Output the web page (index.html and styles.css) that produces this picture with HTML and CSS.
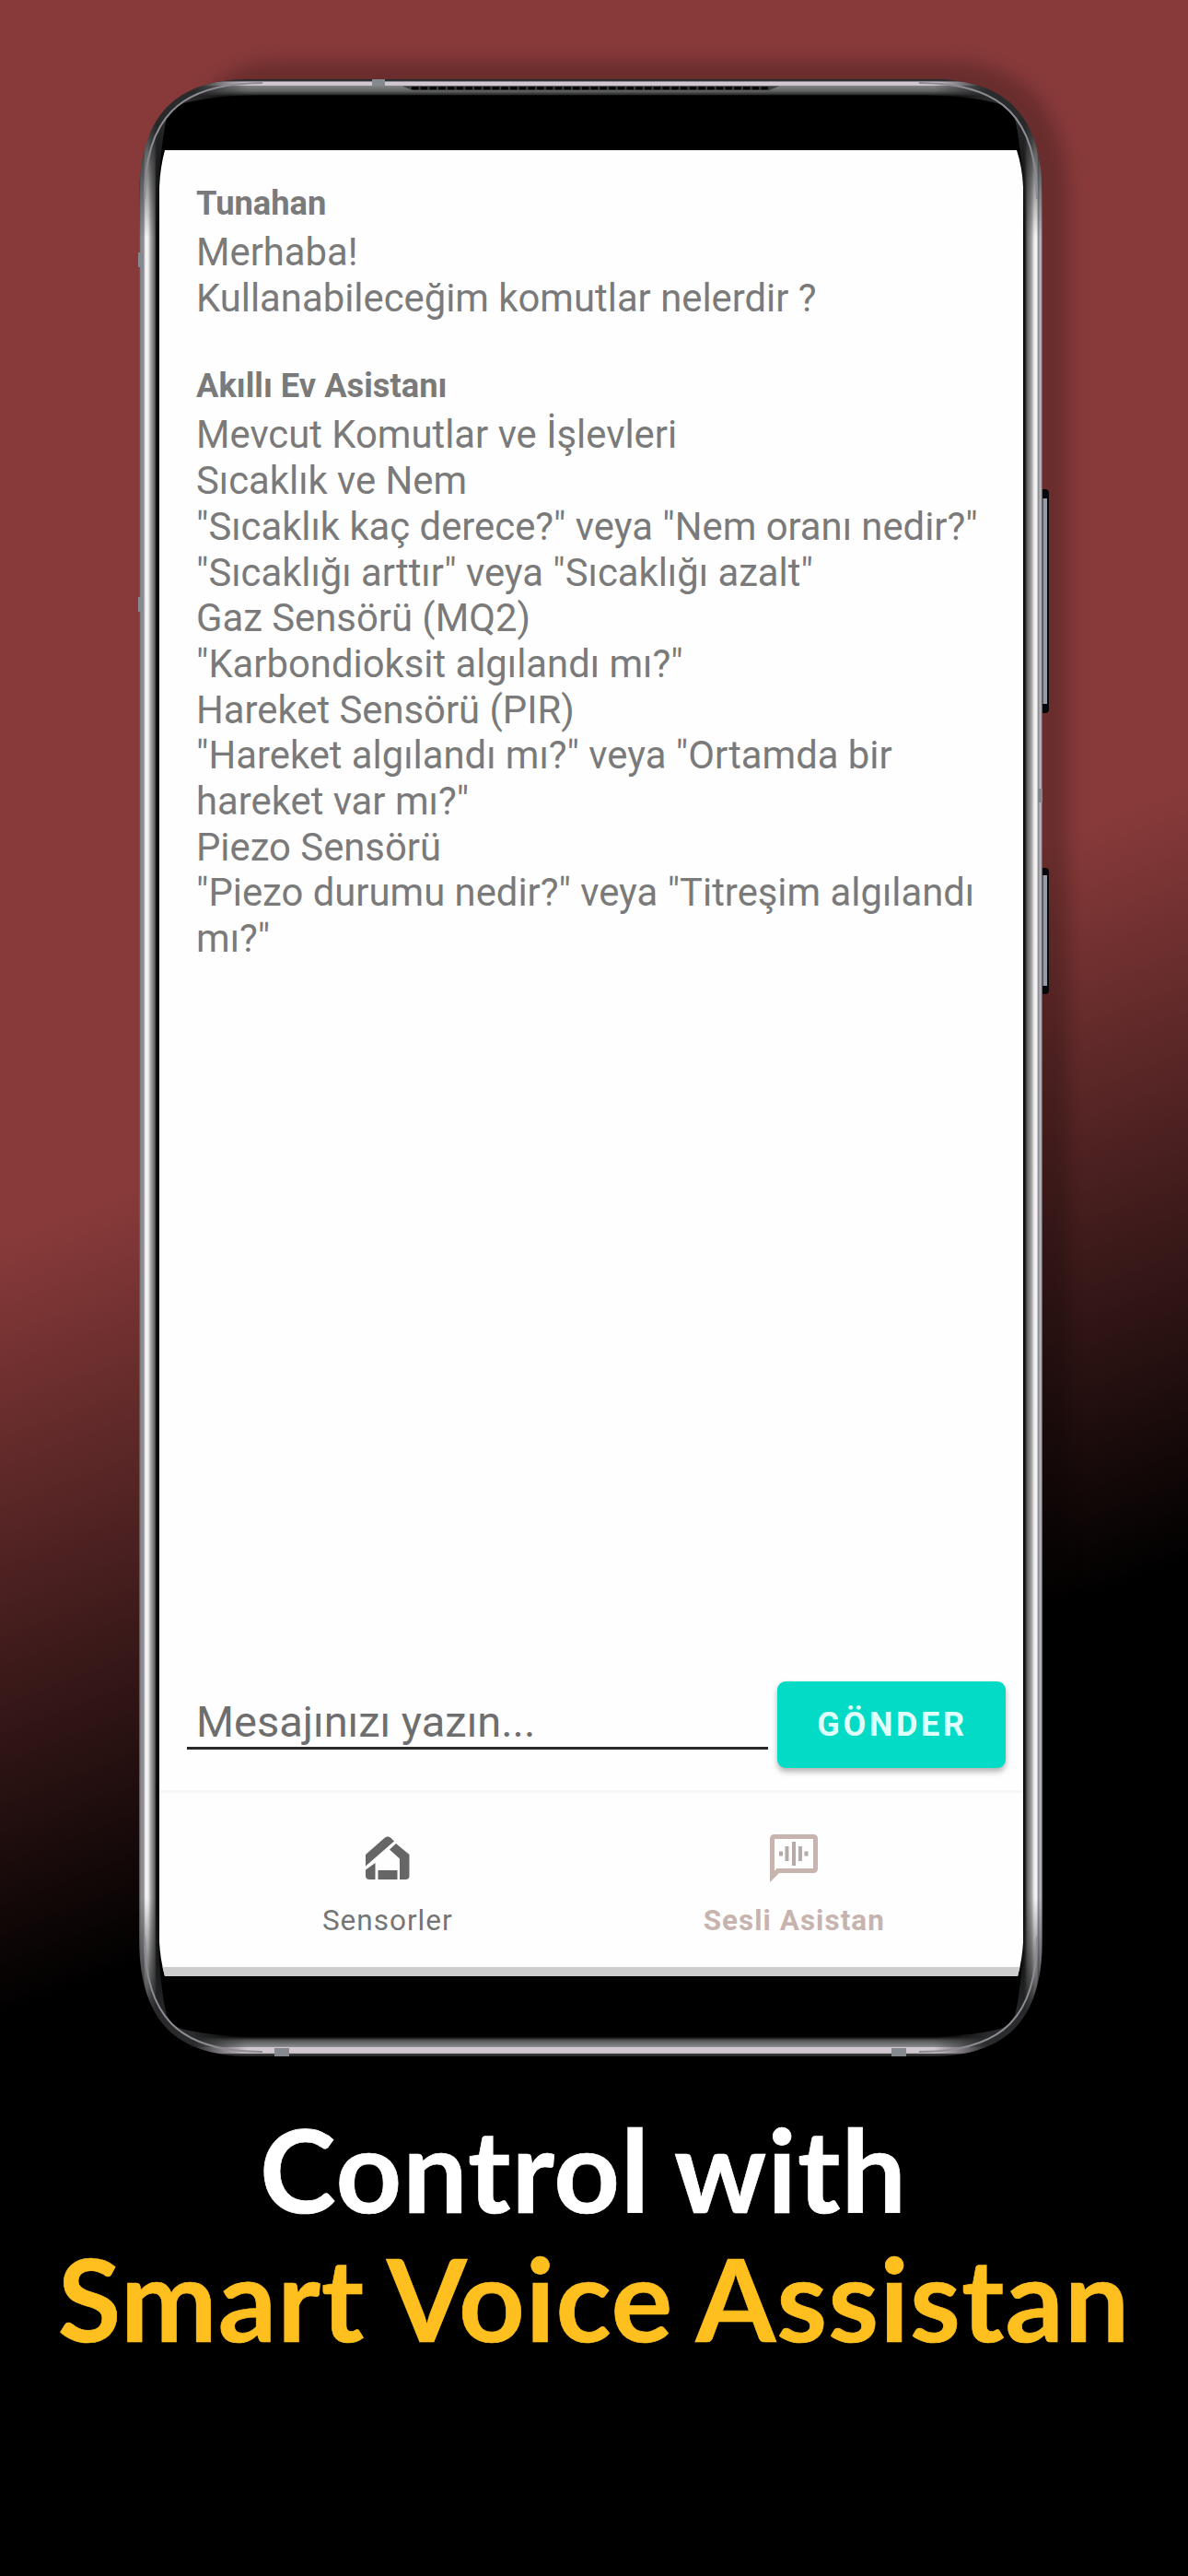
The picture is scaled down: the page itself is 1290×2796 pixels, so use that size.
FILE: index.html
```html
<!DOCTYPE html>
<html lang="tr">
<head>
<meta charset="utf-8">
<title>Akıllı Ev Asistanı</title>
<link rel="stylesheet" href="styles.css">
</head>
<body>
<main class="poster">
  <section class="phone">
    <svg class="frame" viewBox="0 0 1020 2180" aria-hidden="true">
      <defs>
        <linearGradient id="side" x1="16" x2="997" y1="0" y2="0" gradientUnits="userSpaceOnUse">
          <stop offset="0" stop-color="#4a4a4e"/>
          <stop offset=".002" stop-color="#8c8b92"/>
          <stop offset=".005" stop-color="#8a8a90"/>
          <stop offset=".007" stop-color="#f4f4f4"/>
          <stop offset=".010" stop-color="#f0f0f0"/>
          <stop offset=".013" stop-color="#a4a5a4"/>
          <stop offset=".0175" stop-color="#5c5d5c"/>
          <stop offset=".019" stop-color="#0c0c0c"/>
          <stop offset=".022" stop-color="#000"/>
          <stop offset=".979" stop-color="#000"/>
          <stop offset=".981" stop-color="#222"/>
          <stop offset=".983" stop-color="#636463"/>
          <stop offset=".988" stop-color="#a4a5a4"/>
          <stop offset=".991" stop-color="#f0f0f0"/>
          <stop offset=".994" stop-color="#f4f4f4"/>
          <stop offset=".995" stop-color="#85858c"/>
          <stop offset=".998" stop-color="#c4c1c9"/>
          <stop offset="1" stop-color="#4a4a4e"/>
        </linearGradient>
        <linearGradient id="edge" x1="0" x2="0" y1="16" y2="2162" gradientUnits="userSpaceOnUse">
          <stop offset="0" stop-color="#222"/>
          <stop offset=".001" stop-color="#3a3a3e"/>
          <stop offset=".0013" stop-color="#d2c9d2"/>
          <stop offset=".003" stop-color="#cfc6cf"/>
          <stop offset=".0034" stop-color="#808284"/>
          <stop offset=".006" stop-color="#606161"/>
          <stop offset=".0078" stop-color="#2a2a2a"/>
          <stop offset=".0085" stop-color="#000"/>
          <stop offset=".990" stop-color="#000"/>
          <stop offset=".992" stop-color="#555656"/>
          <stop offset=".9951" stop-color="#8a8c8c"/>
          <stop offset=".9955" stop-color="#d2c9d2"/>
          <stop offset=".9983" stop-color="#cfc6cf"/>
          <stop offset=".9988" stop-color="#3a3d3a"/>
          <stop offset="1" stop-color="#222"/>
        </linearGradient>
        <filter id="soft" x="-10%" y="-10%" width="120%" height="120%"><feGaussianBlur stdDeviation="9"/></filter>
        <linearGradient id="fadeY" x1="0" x2="0" y1="16" y2="2162" gradientUnits="userSpaceOnUse">
          <stop offset=".02" stop-color="#000"/><stop offset=".08" stop-color="#fff"/>
          <stop offset=".92" stop-color="#fff"/><stop offset=".98" stop-color="#000"/>
        </linearGradient>
        <linearGradient id="fadeX" x1="16" x2="997" y1="0" y2="0" gradientUnits="userSpaceOnUse">
          <stop offset=".06" stop-color="#000"/><stop offset=".12" stop-color="#fff"/>
          <stop offset=".88" stop-color="#fff"/><stop offset=".94" stop-color="#000"/>
        </linearGradient>
        <mask id="sideMask"><rect width="1020" height="2180" fill="url(#fadeY)"/></mask>
        <mask id="edgeMask"><rect width="1020" height="2180" fill="url(#fadeX)"/></mask>
      </defs>
      <path d="M56 146C56 54 96 -4 170 -4H890C976 -4 1025 46 1025 146V2040C1025 2110 960 2150 890 2150H170C90 2150 56 2110 56 2040Z" opacity=".22" filter="url(#soft)"/>
      <rect x="992" y="461" width="12" height="243" rx="4" fill="#08080a"/>
      <rect x="997.500" y="471" width="4.500" height="223" fill="#989ca6"/>
      <rect x="992" y="872" width="12" height="137" rx="4" fill="#08080a"/>
      <rect x="997.500" y="880" width="4.500" height="120" fill="#989ca6"/>
      <path d="M16 146C16 60 50 16 138 16H875C963 16 997 60 997 146V2032C997 2118 963 2162 875 2162H138C50 2162 16 2118 16 2032Z" fill="#292a2b"/>
      <path d="M16 146C16 60 50 16 138 16H875C963 16 997 60 997 146V2032C997 2118 963 2162 875 2162H138C50 2162 16 2118 16 2032Z" fill="url(#side)" mask="url(#sideMask)"/>
      <path d="M16 146C16 60 50 16 138 16H875C963 16 997 60 997 146H976C975 72 941 38 867 38H146C72 38 38 72 37 146ZM16 2032C16 2118 50 2162 138 2162H875C963 2162 997 2118 997 2032H976C975 2106 941 2138 867 2138H146C72 2138 38 2106 37 2032Z" fill="url(#edge)" mask="url(#edgeMask)"/>
      <path d="M37 146C38 105 42 76 46 59Q51 47 62 43C86 36 115 33.500 160 33.500H853C898 33.500 927 36 951 43Q962 47 967 59C971 76 975 105 976 146V2032C975 2073 971 2102 967 2117Q962 2129 951 2132C927 2138 898 2141 853 2141H160C115 2141 86 2138 62 2132Q51 2129 46 2117C42 2102 38 2073 37 2032Z"/>
      <path d="M22 146C22 60 58 20 150 20M991 146C991 60 955 20 863 20M22 2032C22 2118 58 2157 150 2157M991 2032C991 2118 955 2157 863 2157" fill="none" stroke="#8d8c93" stroke-width="2"/>
      <path d="M269 16h14v7h-14zM163 2153h16v9h-16zM833 2153h16v9h-16zM15 204h5v16h-5zM15 578h5v16h-5zM992 786h5v15h-5z" fill="#85888c"/>
      <path d="M302 23.500H711L700 28H313Z" fill="#3a3c3e"/>
      <path d="M312 25.700H700" stroke="#000" stroke-width="3" stroke-dasharray="7.500 2.230"/>
    </svg>
    <div class="screen">
      <div class="chat">
        <article class="message">
          <h2 class="sender">Tunahan</h2>
          <p class="text">Merhaba!<br>Kullanabileceğim komutlar nelerdir ?</p>
        </article>
        <article class="message">
          <h2 class="sender">Akıllı Ev Asistanı</h2>
          <p class="text">Mevcut Komutlar ve İşlevleri<br>Sıcaklık ve Nem<br>"Sıcaklık kaç derece?" veya "Nem oranı nedir?"<br>"Sıcaklığı arttır" veya "Sıcaklığı azalt"<br>Gaz Sensörü (MQ2)<br>"Karbondioksit algılandı mı?"<br>Hareket Sensörü (PIR)<br>"Hareket algılandı mı?" veya "Ortamda bir<br>hareket var mı?"<br>Piezo Sensörü<br>"Piezo durumu nedir?" veya "Titreşim algılandı<br>mı?"</p>
        </article>
      </div>
      <div class="composer">
        <div class="field"><span class="hint">Mesajınızı yazın...</span></div>
        <button class="send" type="button"><span>GÖNDER</span></button>
      </div>
      <nav class="tabs">
        <a class="tab">
          <svg class="icon" viewBox="0 0 56 56" aria-hidden="true">
            <path fill="currentColor" d="M4 36.500V24L25 5.500Q28 3.500 31 5.500L35 9.500ZM37 12L51.500 24V47Q51.500 51 47.500 51H41V28.500L30 18.500ZM4 40.500L14.500 33V51H8.500Q4 51 4 47ZM17.500 41H38.500V51H17.500Z"/>
          </svg>
          <span class="label">Sensorler</span>
        </a>
        <a class="tab tab-active">
          <svg class="icon" viewBox="0 0 56 56" aria-hidden="true">
            <path fill="currentColor" fill-rule="evenodd" d="M2 54V7Q2 2 7 2H49Q54 2 54 7V39Q54 44 49 44H12ZM7 41.500L9.500 39H49V7H7Z"/>
            <path d="M14 20.500v5M20.500 15v16M28 10v26M35 15v16M41.500 20.500v5" stroke="#b5aaa8" stroke-width="4"/>
          </svg>
          <span class="label">Sesli Asistan</span>
        </a>
      </nav>
    </div>
  </section>
  <h1 class="headline"><span class="line first">Control with</span><span class="line accent">Smart Voice Assistan</span></h1>
</main>
</body>
</html>
```
FILE: styles.css
```css
* { box-sizing: border-box; margin: 0; padding: 0; }

body { background: #000; }

.poster {
  width: 1290px;
  height: 2796px;
  overflow: hidden;
  padding-top: 70px;
  background: linear-gradient(159deg, #883a3a 41%, #000 66.6%);
}

.phone {
  position: relative;
  width: 1020px;
  height: 2180px;
  margin-left: 135px;
  padding: 93px 0 0 38px;
}

.frame {
  position: absolute;
  inset: 0;
  width: 1020px;
  height: 2180px;
  overflow: visible;
}

.screen {
  position: relative;
  display: flex;
  flex-direction: column;
  width: 938px;
  height: 1982px;
  padding-top: 34px;
  background: #fefefe;
  border-bottom: 10px solid #cdcdcd;
  clip-path: path("M6 0Q1 18 0 40V1945Q1 1964 6 1982H932Q937 1964 938 1945V40Q937 18 931 0Z");
  font-family: Roboto, sans-serif;
  color: #7a7a7a;
}

.chat { flex: 1; padding-left: 40px; }

.message { margin-bottom: 47px; }

.sender {
  font-size: 36.3px;
  line-height: 48px;
  font-weight: 700;
  white-space: nowrap;
}

.text {
  padding-top: 4px;
  font-size: 41.8px;
  line-height: 49.7px;
  white-space: nowrap;
}

.composer {
  display: flex;
  gap: 10px;
  height: 118px;
  padding: 0 19px 0 30px;
}

.field {
  width: 631px;
  height: 74px;
  padding: 16px 0 0 10px;
  border-bottom: 3px solid #2a282a;
  font-size: 47px;
  line-height: 56px;
  color: #6e6e6e;
}

.hint { display: block; white-space: nowrap; }

.send {
  width: 248px;
  height: 94px;
  padding-left: 2px;
  border: 0;
  border-radius: 9px;
  background: #04dbc7;
  box-shadow: 0 4px 6px rgba(0, 0, 0, .3);
  font: 700 36px/95px Roboto, sans-serif;
  letter-spacing: 3.7px;
  color: #dffffb;
}

.tabs {
  display: flex;
  height: 192px;
  padding: 0 28px 0 27px;
  border-top: 3px solid #f7f7f7;
}

.tab {
  display: flex;
  flex: 1;
  flex-direction: column;
  align-items: center;
  padding-top: 43px;
  color: #666;
}

.tab-active { color: #c8b4af; }

.icon { width: 56px; height: 56px; }

.label {
  padding-top: 20px;
  font-size: 31.5px;
  line-height: 40px;
  letter-spacing: 1px;
  color: #757575;
}

.tab-active .label { font-weight: 700; color: #c8b4af; }

.headline {
  display: flex;
  flex-direction: column;
  align-items: center;
  padding-top: 34px;
  font: 700 125px/140px Lato, sans-serif;
  letter-spacing: 1px;
  word-spacing: -3px;
  -webkit-text-stroke: .7px currentColor;
  color: #fff;
}

.line { white-space: nowrap; }

.first { margin-right: 23px; }

.accent { color: #ffc01f; }
```
